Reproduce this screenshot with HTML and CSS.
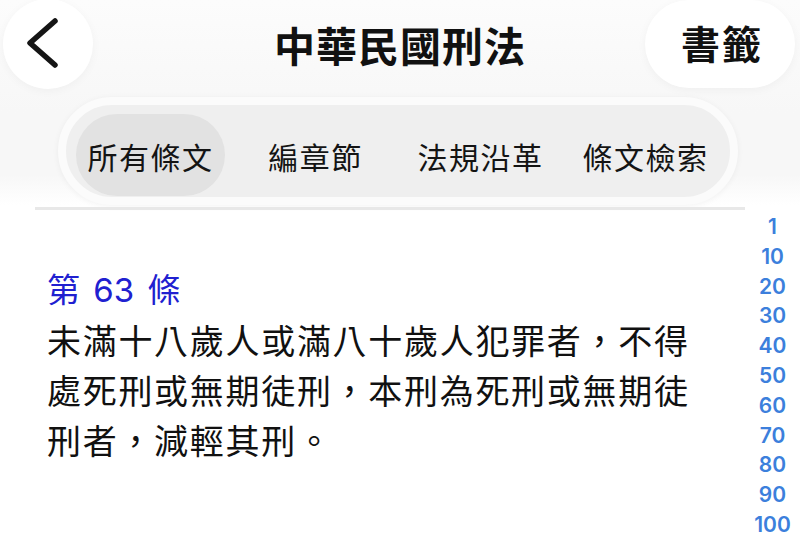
FILE: index.html
```html
<!DOCTYPE html>
<html lang="zh-Hant">
<head>
<meta charset="utf-8">
<title>中華民國刑法</title>
<link rel="stylesheet" href="styles.css">
</head>
<body>
<div class="top">
  <header class="header">
    <div class="left">
      <button class="back" aria-label="返回">
        <svg width="90" height="90" viewBox="0 0 90 90"><path d="M52 22 L27 44 L52 66" fill="none" stroke="#151515" stroke-width="5.5" stroke-linecap="round" stroke-linejoin="round"/></svg>
      </button>
    </div>
    <h1 class="title">中華民國刑法</h1>
    <div class="right">
      <button class="bookmark">書籤</button>
    </div>
  </header>
  <nav class="segment">
    <div class="tab active">所有條文</div>
    <div class="tab">編章節</div>
    <div class="tab">法規沿革</div>
    <div class="tab">條文檢索</div>
  </nav>
</div>
<div class="content">
  <div class="main">
    <div class="divider"></div>
    <article class="article">
      <h2 class="art-title">第 63 條</h2>
      <p class="art-body">未滿十八歲人或滿八十歲人犯罪者，不得處死刑或無期徒刑，本刑為死刑或無期徒刑者，減輕其刑。</p>
    </article>
  </div>
  <ul class="index">
    <li>1</li><li>10</li><li>20</li><li>30</li><li>40</li><li>50</li><li>60</li><li>70</li><li>80</li><li>90</li><li>100</li>
  </ul>
</div>
</body>
</html>
```
FILE: styles.css
```css
* { box-sizing: border-box; }
html, body {
  margin: 0;
  padding: 0;
  width: 800px;
  height: 533px;
  overflow: hidden;
  background: #ffffff;
  font-family: "Noto Sans CJK TC", "Noto Sans", sans-serif;
  color: #111111;
}
.top {
  height: 205px;
  background: linear-gradient(to bottom, #fcfcfc 0%, #f7f7f7 55%, #f7f7f7 85%, #ffffff 100%);
}
.header {
  display: grid;
  grid-template-columns: 1fr auto 1fr;
  align-items: center;
  height: 90px;
}
.left { display: flex; justify-content: flex-start; }
.right { display: flex; justify-content: flex-end; }
.back {
  width: 90px;
  height: 90px;
  margin: -2px 0 0 3px;
  padding: 0;
  border: none;
  border-radius: 50%;
  background: #ffffff;
  box-shadow: 0 2px 10px rgba(0,0,0,0.04);
  display: flex;
}
.title {
  margin: -3px 0 0 0;
  font-size: 41px;
  font-weight: 700;
  line-height: 90px;
  letter-spacing: 1px;
}
.bookmark {
  width: 150px;
  height: 88px;
  margin: -2px 5px 0 0;
  padding: 0 0 4px 4px;
  border: none;
  border-radius: 44px;
  background: #ffffff;
  box-shadow: 0 2px 10px rgba(0,0,0,0.04);
  font-family: "Noto Sans CJK TC", sans-serif;
  font-size: 39px;
  font-weight: 600;
  color: #111;
  letter-spacing: 2px;
}
.segment {
  margin: 7px 0 0 58px;
  width: 680px;
  height: 108px;
  border: 8px solid #fbfbfb;
  border-radius: 54px;
  background: #efefef;
  box-shadow: 0 1px 6px rgba(0,0,0,0.05);
  display: flex;
  align-items: center;
  gap: 16px;
  padding: 8px 10px 0 10px;
}
.tab {
  width: 150px;
  height: 82px;
  border-radius: 41px;
  display: flex;
  align-items: center;
  justify-content: center;
  font-size: 30px;
  letter-spacing: 1.5px;
  color: #141414;
  padding-top: 2px;
}
.tab.active { background: #e2e2e2; }
.content {
  display: flex;
}
.main {
  width: 745px;
  padding-left: 35px;
}
.divider {
  margin-top: 2px;
  height: 3px;
  background: #e8e8e8;
}
.article {
  padding-left: 12px;
  margin-top: 55px;
  width: 672px;
}
.art-title {
  margin: 0;
  font-family: "Inter", "Noto Sans CJK TC", sans-serif;
  font-weight: 400;
  font-size: 33px;
  line-height: 50px;
  letter-spacing: 0;
  word-spacing: 4px;
  color: #2020d0;
}
.art-body {
  margin: 0;
  font-size: 34px;
  line-height: 50px;
  letter-spacing: 1.7px;
  color: #111;
}
.index {
  list-style: none;
  margin: 0;
  padding: 7px 0 0 0;
  width: 55px;
  text-align: center;
  font-family: "Inter", "Liberation Sans", sans-serif;
  font-weight: 600;
  font-size: 21px;
  line-height: 29.8px;
  color: #3c7fdc;
}
```
